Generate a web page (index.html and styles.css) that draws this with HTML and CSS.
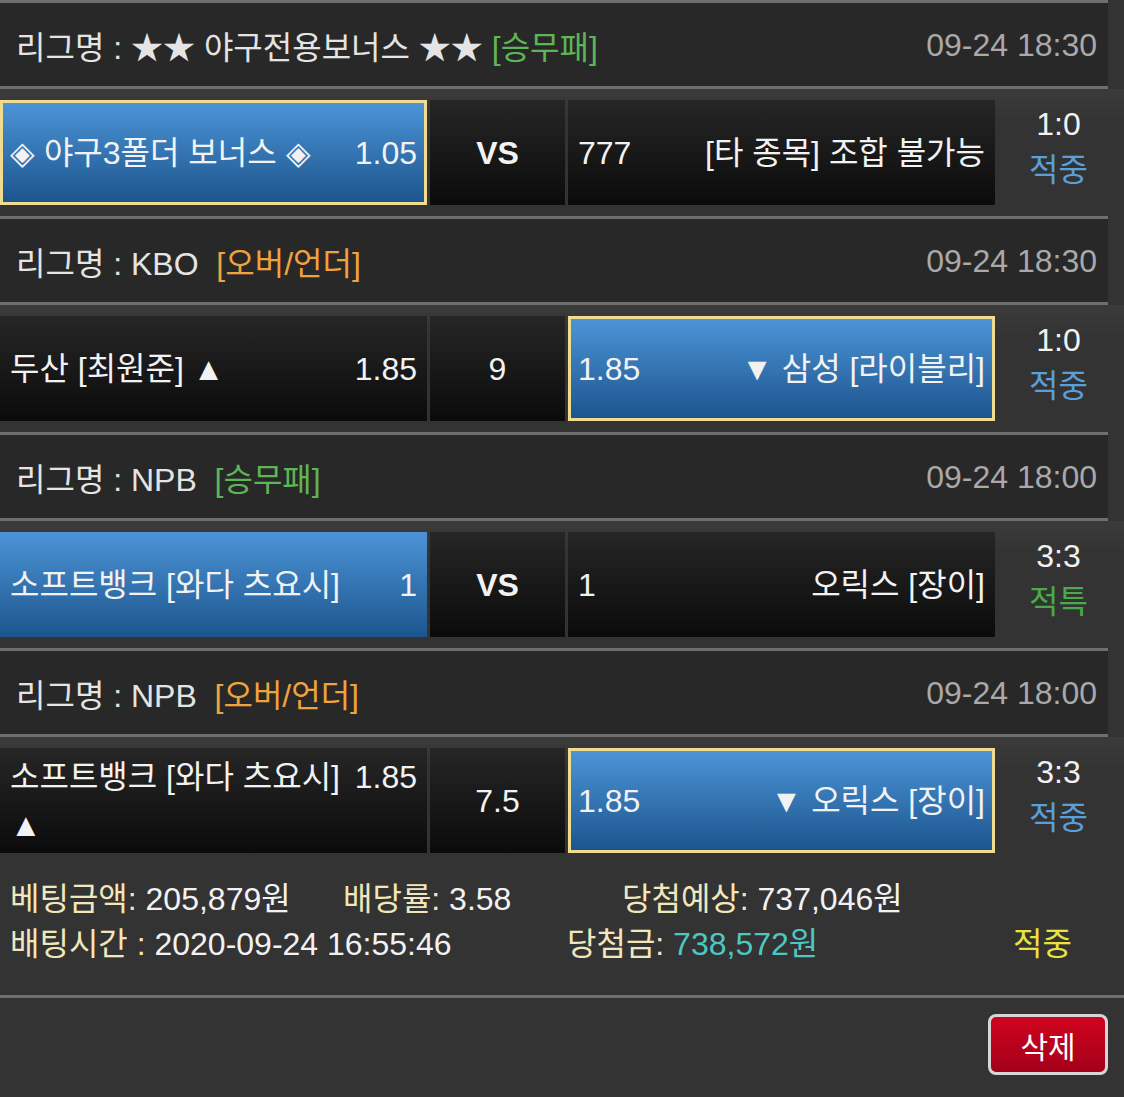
FILE: index.html
```html
<!DOCTYPE html>
<html>
<head>
    <title>배팅내역</title>
    <link rel="stylesheet" href="styles.css">
</head>
<body>
    <div class="slip">
        <div class="match">
            <div class="league">
                <span class="name">리그명 : ★★ 야구전용보너스 ★★ <em class="type wdl">[승무패]</em></span>
                <span class="time">09-24 18:30</span>
            </div>
            <div class="game">
                <div class="pick blue sel">
                    <div class="pick-in"><span class="team">◈ 야구3폴더 보너스 ◈</span><span class="odds">1.05</span></div>
                </div>
                <div class="mid vs">VS</div>
                <div class="pick">
                    <div class="pick-in"><span class="odds">777</span><span class="team">[타 종목] 조합 불가능</span></div>
                </div>
                <div class="result"><span>1:0</span><span class="hit">적중</span></div>
            </div>
        </div>

        <div class="match">
            <div class="league">
                <span class="name">리그명 : KBO &nbsp;<em class="type ou">[오버/언더]</em></span>
                <span class="time">09-24 18:30</span>
            </div>
            <div class="game">
                <div class="pick">
                    <div class="pick-in"><span class="team">두산 [최원준] ▲</span><span class="odds">1.85</span></div>
                </div>
                <div class="mid">9</div>
                <div class="pick blue sel">
                    <div class="pick-in"><span class="odds">1.85</span><span class="team">▼ 삼성 [라이블리]</span></div>
                </div>
                <div class="result"><span>1:0</span><span class="hit">적중</span></div>
            </div>
        </div>

        <div class="match">
            <div class="league">
                <span class="name">리그명 : NPB &nbsp;<em class="type wdl">[승무패]</em></span>
                <span class="time">09-24 18:00</span>
            </div>
            <div class="game">
                <div class="pick blue">
                    <div class="pick-in"><span class="team">소프트뱅크 [와다 츠요시]</span><span class="odds">1</span></div>
                </div>
                <div class="mid vs">VS</div>
                <div class="pick">
                    <div class="pick-in"><span class="odds">1</span><span class="team">오릭스 [장이]</span></div>
                </div>
                <div class="result"><span>3:3</span><span class="void">적특</span></div>
            </div>
        </div>

        <div class="match">
            <div class="league">
                <span class="name">리그명 : NPB &nbsp;<em class="type ou">[오버/언더]</em></span>
                <span class="time">09-24 18:00</span>
            </div>
            <div class="game">
                <div class="pick">
                    <div class="pick-in"><span class="team">소프트뱅크 [와다 츠요시] ▲</span><span class="odds">1.85</span></div>
                </div>
                <div class="mid">7.5</div>
                <div class="pick blue sel">
                    <div class="pick-in"><span class="odds">1.85</span><span class="team">▼ 오릭스 [장이]</span></div>
                </div>
                <div class="result"><span>3:3</span><span class="hit">적중</span></div>
            </div>
        </div>
    </div>

    <div class="summary">
        <div class="sum-row first">
            <span><b>베팅금액:</b> 205,879원</span>
            <span><b>배당률:</b> 3.58</span>
            <span><b>당첨예상:</b> 737,046원</span>
        </div>
        <div class="sum-row second">
            <span><b>배팅시간 :</b> 2020-09-24 16:55:46</span>
            <span><b>당첨금:</b> <i class="won">738,572원</i></span>
            <span class="state">적중</span>
        </div>
    </div>

    <div class="actions">
        <button type="button" class="delete">삭제</button>
    </div>
</body>
</html>
```

FILE: styles.css
```css
body {
    margin: 0;
    background-color: #333;
    color: #f2f2f2;
    font-family: "Liberation Sans", "Noto Sans CJK KR", sans-serif;
    font-size: 32px;
}
em, i, b {
    font-style: normal;
    font-weight: normal;
}
.league {
    width: 1108px;
    height: 89px;
    box-sizing: border-box;
    padding-top: 1px;
    background-color: #282828;
    border-top: 3px solid #6e6e6e;
    border-bottom: 3px solid #6e6e6e;
    display: flex;
    justify-content: space-between;
    align-items: center;
}
.league .name {
    padding-left: 16px;
    color: #e4e4e4;
}
.league .time {
    padding-right: 11px;
    color: #a9a9a9;
}
.type.wdl {
    color: #5db556;
}
.type.ou {
    color: #eea33c;
}
.game {
    display: grid;
    grid-template-columns: 427px 135px 427px 1fr;
    column-gap: 3px;
    height: 127px;
    box-sizing: border-box;
    padding: 11px 0;
    background: linear-gradient(#3b3b3b, #333 25%);
}
.pick, .mid {
    background: linear-gradient(#262626, #0b0b0b);
    box-sizing: border-box;
    display: flex;
    align-items: center;
    line-height: 48px;
}
.pick {
    padding: 0 10px;
}
.pick.blue {
    background: linear-gradient(#4c94d7, #1c558d);
}
.pick.sel {
    border: 3px solid #f0db8f;
    padding: 0 7px;
}
.pick-in {
    width: 100%;
    display: flex;
    justify-content: space-between;
    align-items: flex-start;
    gap: 12px;
}
.mid {
    justify-content: center;
}
.mid.vs {
    font-weight: bold;
}
.result {
    display: flex;
    flex-direction: column;
    align-items: center;
    justify-content: center;
    line-height: 46px;
    padding: 0 5px 12px 0;
}
.result .hit {
    color: #5b9fd9;
}
.result .void {
    color: #4aaa48;
}
.summary {
    padding: 13px 0 28px 10px;
    border-bottom: 3px solid #6e6e6e;
    line-height: 45px;
}
.sum-row {
    display: grid;
}
.sum-row.first {
    grid-template-columns: 333px 279px 1fr;
}
.sum-row.second {
    grid-template-columns: 557px 446px 1fr;
}
.sum-row b {
    color: #f1e7bd;
}
.won {
    color: #4ec7c3;
}
.state {
    color: #ebe23d;
}
.actions {
    display: flex;
    justify-content: flex-end;
    padding: 16px 16px 0 0;
}
.delete {
    width: 120px;
    height: 61px;
    background: linear-gradient(#d0041f, #a3001a);
    border: 3px solid #d6d6d6;
    border-radius: 8px;
    color: #fff;
    font-family: "Liberation Sans", "Noto Sans CJK KR", sans-serif;
    font-size: 30px;
    cursor: pointer;
}
```
